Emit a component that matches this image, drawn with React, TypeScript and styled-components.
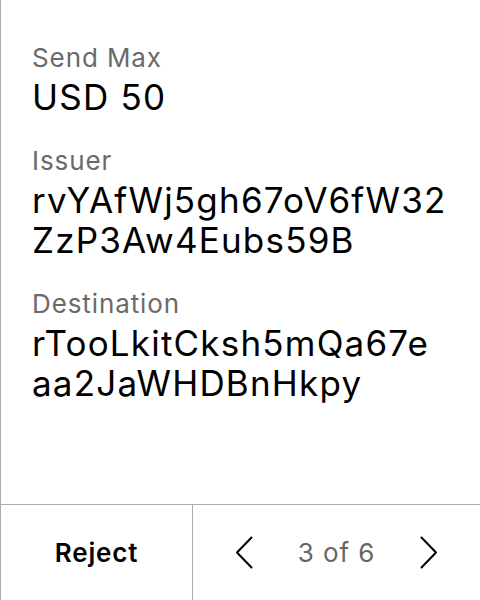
import { FC } from "react"
import styled, { createGlobalStyle } from "styled-components"

const GlobalStyle = createGlobalStyle`
    html, body {
        margin: 0;
        padding: 0;
        background: #ffffff;
    }

    body {
        font-family: Inter, "Noto Sans", "Liberation Sans", sans-serif;
        -webkit-font-smoothing: antialiased;
    }
`

const Sheet = styled.div`
    display: flex;
    flex-direction: column;
    width: 480px;
    height: 600px;
    box-sizing: border-box;
    border-left: 1px solid #ababab;
    background: #ffffff;
`

const Details = styled.div`
    flex: 1;
    display: flex;
    flex-direction: column;
    gap: 29px;
    padding: 43px 30px 0 31px;
`

const Field = styled.div`
    display: flex;
    flex-direction: column;
    gap: 4px;
`

const Label = styled.div`
    font-size: 26px;
    line-height: 30px;
    letter-spacing: 0.9px;
    color: #6a6a6a;
`

const Value = styled.div`
    font-size: 35px;
    line-height: 40px;
    letter-spacing: 1.2px;
    color: #000000;
    word-break: break-all;
`

const Footer = styled.div`
    display: grid;
    grid-template-columns: 192px 1fr;
    height: 96px;
    box-sizing: border-box;
    border-top: 1px solid #ababab;
`

const RejectButton = styled.button`
    display: flex;
    align-items: center;
    justify-content: center;
    border: none;
    border-right: 1px solid #ababab;
    background: transparent;
    font-family: inherit;
    font-size: 26px;
    font-weight: 600;
    letter-spacing: 0.8px;
    color: #000000;
    padding: 0;
`

const Pager = styled.div`
    display: flex;
    align-items: center;
    justify-content: center;
    gap: 45px;
`

const ArrowButton = styled.button`
    display: flex;
    align-items: center;
    justify-content: center;
    border: none;
    background: transparent;
    padding: 0;
    color: #000000;
`

const Count = styled.span`
    font-size: 26px;
    letter-spacing: 0.9px;
    color: #666666;
`

const Chevron: FC<{ dir: "left" | "right" }> = ({ dir }) => (
    <svg width="18" height="33" viewBox="0 0 18 33" fill="none">
        <path
            d={dir === "left" ? "M16.5 1.5 L2 16.5 L16.5 31.5" : "M1.5 1.5 L16 16.5 L1.5 31.5"}
            stroke="currentColor"
            strokeWidth="2"
            strokeLinecap="round"
            strokeLinejoin="round"
        />
    </svg>
)

const fields = [
    { label: "Send Max", value: "USD 50" },
    { label: "Issuer", value: "rvYAfWj5gh67oV6fW32ZzP3Aw4Eubs59B" },
    { label: "Destination", value: "rTooLkitCksh5mQa67eaa2JaWHDBnHkpy" },
]

const App: FC = () => (
    <>
        <GlobalStyle />
        <Sheet>
            <Details>
                {fields.map(f => (
                    <Field key={f.label}>
                        <Label>{f.label}</Label>
                        <Value>{f.value}</Value>
                    </Field>
                ))}
            </Details>
            <Footer>
                <RejectButton>Reject</RejectButton>
                <Pager>
                    <ArrowButton aria-label="Previous">
                        <Chevron dir="left" />
                    </ArrowButton>
                    <Count>3 of 6</Count>
                    <ArrowButton aria-label="Next">
                        <Chevron dir="right" />
                    </ArrowButton>
                </Pager>
            </Footer>
        </Sheet>
    </>
)

export default App
